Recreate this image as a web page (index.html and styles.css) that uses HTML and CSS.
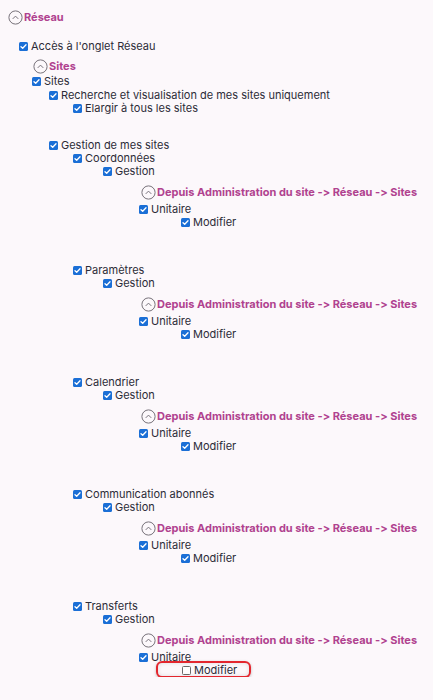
FILE: index.html
```html
<!DOCTYPE html>
<html lang="fr">
<head>
<meta charset="utf-8">
<link rel="stylesheet" href="styles.css">
</head>
<body>
<div class="page">
  <div class="head"><svg class="icon" viewBox="0 0 15 15"><circle cx="7.5" cy="7.5" r="6.6"/><path d="M5 8.6 7.5 6.1 10 8.6"/></svg><span>Réseau</span></div>
  <div class="row i11 mt15"><span class="cb"></span><span>Accès à l'onglet Réseau</span></div>
  <div class="head i25 mt5"><svg class="icon" viewBox="0 0 15 15"><circle cx="7.5" cy="7.5" r="6.6"/><path d="M5 8.6 7.5 6.1 10 8.6"/></svg><span>Sites</span></div>
  <div class="row i24 mt1"><span class="cb"></span><span>Sites</span></div>
  <div class="row i41 mt1"><span class="cb"></span><span>Recherche et visualisation de mes sites uniquement</span></div>
  <div class="row i65"><span class="cb"></span><span>Elargir à tous les sites</span></div>
  <div class="row i41 mt24"><span class="cb"></span><span>Gestion de mes sites</span></div>

  <div class="block">
    <div class="row i65"><span class="cb"></span><span>Coordonnées</span></div>
    <div class="row i95"><span class="cb"></span><span>Gestion</span></div>
    <div class="head i133 mt6"><svg class="icon" viewBox="0 0 15 15"><circle cx="7.5" cy="7.5" r="6.6"/><path d="M5 8.6 7.5 6.1 10 8.6"/></svg><span>Depuis Administration du site -&gt; Réseau -&gt; Sites</span></div>
    <div class="row i131 mt3"><span class="cb"></span><span>Unitaire</span></div>
    <div class="row i173"><span class="cb"></span><span>Modifier</span></div>
  </div>

  <div class="block">
    <div class="row i65"><span class="cb"></span><span>Paramètres</span></div>
    <div class="row i95"><span class="cb"></span><span>Gestion</span></div>
    <div class="head i133 mt6"><svg class="icon" viewBox="0 0 15 15"><circle cx="7.5" cy="7.5" r="6.6"/><path d="M5 8.6 7.5 6.1 10 8.6"/></svg><span>Depuis Administration du site -&gt; Réseau -&gt; Sites</span></div>
    <div class="row i131 mt3"><span class="cb"></span><span>Unitaire</span></div>
    <div class="row i173"><span class="cb"></span><span>Modifier</span></div>
  </div>

  <div class="block">
    <div class="row i65"><span class="cb"></span><span>Calendrier</span></div>
    <div class="row i95"><span class="cb"></span><span>Gestion</span></div>
    <div class="head i133 mt6"><svg class="icon" viewBox="0 0 15 15"><circle cx="7.5" cy="7.5" r="6.6"/><path d="M5 8.6 7.5 6.1 10 8.6"/></svg><span>Depuis Administration du site -&gt; Réseau -&gt; Sites</span></div>
    <div class="row i131 mt3"><span class="cb"></span><span>Unitaire</span></div>
    <div class="row i173"><span class="cb"></span><span>Modifier</span></div>
  </div>

  <div class="block">
    <div class="row i65"><span class="cb"></span><span>Communication abonnés</span></div>
    <div class="row i95"><span class="cb"></span><span>Gestion</span></div>
    <div class="head i133 mt6"><svg class="icon" viewBox="0 0 15 15"><circle cx="7.5" cy="7.5" r="6.6"/><path d="M5 8.6 7.5 6.1 10 8.6"/></svg><span>Depuis Administration du site -&gt; Réseau -&gt; Sites</span></div>
    <div class="row i131 mt3"><span class="cb"></span><span>Unitaire</span></div>
    <div class="row i173"><span class="cb"></span><span>Modifier</span></div>
  </div>

  <div class="block">
    <div class="row i65"><span class="cb"></span><span>Transferts</span></div>
    <div class="row i95"><span class="cb"></span><span>Gestion</span></div>
    <div class="head i133 mt6"><svg class="icon" viewBox="0 0 15 15"><circle cx="7.5" cy="7.5" r="6.6"/><path d="M5 8.6 7.5 6.1 10 8.6"/></svg><span>Depuis Administration du site -&gt; Réseau -&gt; Sites</span></div>
    <div class="row i131 mt3"><span class="cb"></span><span>Unitaire</span></div>
    <div class="row i174 highlight"><span class="cb off"></span><span>Modifier</span></div>
  </div>
</div>
</body>
</html>
```

FILE: styles.css
```css
html, body {
  margin: 0;
  background: #fcf8fb;
}
body {
  font-family: Inter, "Noto Sans", sans-serif;
  font-size: 11px;
  color: #2c2c38;
  font-variant-ligatures: none;
  font-feature-settings: "calt" 0, "liga" 0;
}
.page {
  padding: 9px 0 0 8px;
}
.head {
  display: flex;
  align-items: center;
  gap: 1px;
  height: 16px;
  font-weight: 700;
  color: #b0428f;
}
.icon {
  width: 15px;
  height: 15px;
  flex: none;
}
.icon circle {
  fill: none;
  stroke: #77727a;
  stroke-width: 1;
}
.icon path {
  fill: none;
  stroke: #77727a;
  stroke-width: 1;
  stroke-linecap: round;
  stroke-linejoin: round;
}
.row {
  display: flex;
  align-items: center;
  gap: 3px;
  height: 13px;
  line-height: 13px;
  white-space: nowrap;
}
.cb {
  width: 9px;
  height: 9px;
  flex: none;
  box-sizing: border-box;
  border-radius: 1.5px;
  background: #1b6fd6 url("data:image/svg+xml,%3Csvg xmlns='http://www.w3.org/2000/svg' viewBox='0 0 9 9'%3E%3Cpath d='M2 4.7 3.7 6.3 7 2.8' fill='none' stroke='white' stroke-width='1.3' stroke-linecap='round' stroke-linejoin='round'/%3E%3C/svg%3E") center / 9px 9px no-repeat;
}
.cb.off {
  background: #fff;
  border: 1px solid #6b6b6b;
  border-radius: 1.5px;
}
.block + .block {
  margin-top: 35px;
}
.i11 { margin-left: 11px; }
.i24 { margin-left: 24px; }
.i25 { margin-left: 25px; }
.i41 { margin-left: 41px; }
.i65 { margin-left: 65px; }
.i95 { margin-left: 95px; }
.i131 { margin-left: 131px; }
.i133 { margin-left: 133px; }
.i173 { margin-left: 173px; }
.i174 { margin-left: 174px; }
.mt1 { margin-top: 1px; }
.mt3 { margin-top: 3px; }
.mt5 { margin-top: 5px; }
.mt6 { margin-top: 6px; }
.mt15 { margin-top: 15px; }
.mt24 { margin-top: 24px; }
.highlight {
  position: relative;
}
.highlight::after {
  content: "";
  position: absolute;
  left: -26px;
  top: -3px;
  width: 91px;
  height: 13px;
  border: 2px solid #e3262e;
  border-radius: 6px;
  box-shadow: 0 1px 3px rgba(0, 0, 0, 0.25), inset 0 0 4px rgba(0, 0, 0, 0.12);
  pointer-events: none;
}
```
